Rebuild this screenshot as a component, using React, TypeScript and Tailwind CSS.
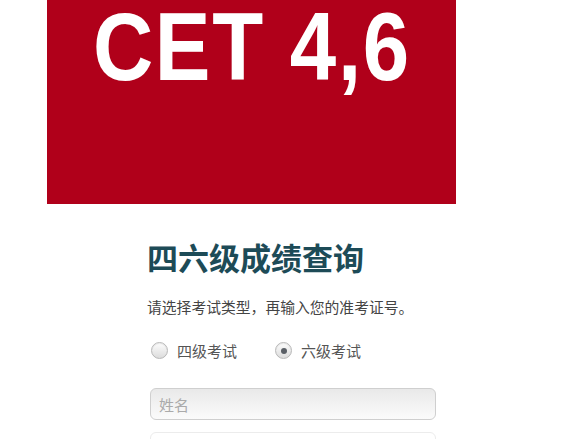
import React, { useState } from 'react';

const cjk = 'font-["Microsoft_YaHei","Noto_Sans_CJK_SC",sans-serif]';

const Radio: React.FC<{ checked: boolean; label: string; onClick: () => void }> = ({ checked, label, onClick }) => (
  <button type="button" onClick={onClick} className="flex items-center gap-[9px]">
    <span className="w-[17px] h-[17px] rounded-full border border-[#b8b8b8] bg-gradient-to-b from-[#fdfdfd] to-[#dcdcdc] shadow-[inset_0_1px_1px_rgba(0,0,0,0.08)] flex items-center justify-center">
      {checked && <span className="w-[6px] h-[6px] rounded-full bg-[#5a5f66]" />}
    </span>
    <span className={`${cjk} text-[15px] leading-[17px] text-[#555]`}>{label}</span>
  </button>
);

const App: React.FC = () => {
  const [level, setLevel] = useState<4 | 6>(6);

  return (
    <div className="w-[580px] h-[439px] overflow-hidden bg-white">
      <div className="ml-[47px] w-[409px] h-[204px] bg-[#b0001a] flex justify-center items-start pt-[3px]">
        <h1 className='font-["Liberation_Sans",Arial,sans-serif] font-bold text-white text-[97px] leading-[88px] tracking-[2px] scale-x-[0.86] whitespace-nowrap'>
          CET 4,6
        </h1>
      </div>

      <div className="ml-[147px] pt-[38px] flex flex-col">
        <h2 className={`${cjk} font-bold text-[31px] leading-[30px] text-[#1d4b57]`}>四六级成绩查询</h2>
        <p className={`${cjk} mt-[27px] text-[14.8px] leading-[15px] text-[#444]`}>
          请选择考试类型，再输入您的准考证号。
        </p>
        <div className="mt-[28px] ml-[4px] flex items-center gap-[38px]">
          <Radio checked={level === 4} label="四级考试" onClick={() => setLevel(4)} />
          <Radio checked={level === 6} label="六级考试" onClick={() => setLevel(6)} />
        </div>
        <input
          placeholder="姓名"
          className={`${cjk} mt-[29px] ml-[3px] w-[286px] h-[32px] rounded-[6px] border border-[#cfcfcf] bg-gradient-to-b from-[#e9e9e9] to-[#fbfbfb] px-[8px] text-[15px] text-[#555] placeholder:text-[#aaa] outline-none`}
        />
        <input
          placeholder="准考证号"
          className={`${cjk} mt-[12px] ml-[3px] w-[286px] h-[32px] rounded-[6px] border border-[#ececec] bg-white px-[8px] text-[15px] text-[#555] placeholder:text-[#aaa] outline-none`}
        />
      </div>
    </div>
  );
};

export default App;
